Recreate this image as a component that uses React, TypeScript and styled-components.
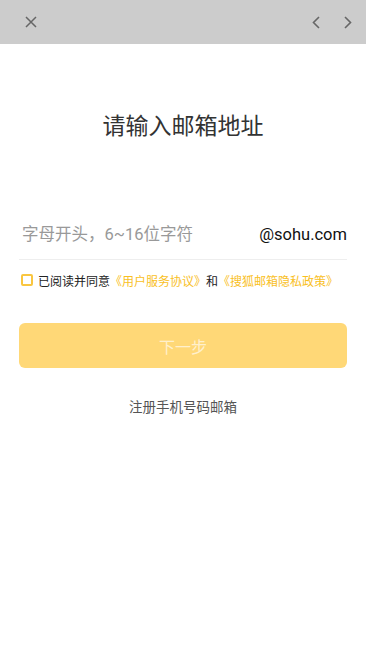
import React from "react";
import styled, { createGlobalStyle } from "styled-components";

const GlobalStyle = createGlobalStyle`
  html, body {
    margin: 0;
    padding: 0;
    background: #ffffff;
  }
  body {
    font-family: Roboto, "Noto Sans CJK SC", sans-serif;
  }
`;

function App() {
  return (
    <>
      <GlobalStyle />
      <Page>
        <Header>
          <IconButton aria-label="close">
            <svg width="12" height="12" viewBox="0 0 12 12">
              <path d="M1 1 L11 11 M11 1 L1 11" stroke="#666" strokeWidth="1.5" fill="none" />
            </svg>
          </IconButton>
          <NavGroup>
            <IconButton aria-label="back">
              <svg width="8" height="13" viewBox="0 0 8 13">
                <path d="M7 1 L1.5 6.5 L7 12" stroke="#666" strokeWidth="1.6" fill="none" />
              </svg>
            </IconButton>
            <IconButton aria-label="forward">
              <svg width="8" height="13" viewBox="0 0 8 13">
                <path d="M1 1 L6.5 6.5 L1 12" stroke="#666" strokeWidth="1.6" fill="none" />
              </svg>
            </IconButton>
          </NavGroup>
        </Header>

        <Content>
          <Title>请输入邮箱地址</Title>

          <InputRow>
            <EmailInput placeholder="字母开头，6~16位字符" />
            <Domain>@sohu.com</Domain>
          </InputRow>

          <AgreeRow>
            <CheckBox />
            <span>已阅读并同意</span>
            <Link>《用户服务协议》</Link>
            <span>和</span>
            <Link>《搜狐邮箱隐私政策》</Link>
          </AgreeRow>

          <NextButton>下一步</NextButton>

          <SubLink>注册手机号码邮箱</SubLink>
        </Content>
      </Page>
    </>
  );
}

const Page = styled.div`
  width: 100%;
  min-height: 650px;
  background: #ffffff;
`;

const Header = styled.div`
  display: flex;
  align-items: center;
  justify-content: space-between;
  height: 44px;
  padding: 0 6px 0 19px;
  background: #cccccc;
  box-sizing: border-box;
`;

const NavGroup = styled.div`
  display: flex;
  align-items: center;
  gap: 8px;
`;

const IconButton = styled.button`
  display: flex;
  align-items: center;
  justify-content: center;
  width: 24px;
  height: 24px;
  padding: 0;
  border: none;
  background: transparent;
`;

const Content = styled.div`
  display: flex;
  flex-direction: column;
  padding: 0 19px;
`;

const Title = styled.h1`
  margin: 67px 0 0;
  font-size: 23px;
  line-height: 32px;
  font-weight: 400;
  color: #333333;
  text-align: center;
`;

const InputRow = styled.div`
  display: flex;
  align-items: center;
  height: 50px;
  margin-top: 66px;
  border-bottom: 1px solid #eeeeee;
`;

const EmailInput = styled.input`
  flex: 1;
  min-width: 0;
  padding: 0 0 0 3px;
  border: none;
  outline: none;
  background: transparent;
  font-family: Roboto, "Noto Sans CJK SC", sans-serif;
  font-size: 16.5px;
  color: #333;

  &::placeholder {
    color: #999999;
  }
`;

const Domain = styled.span`
  font-size: 16.5px;
  color: #111111;
`;

const AgreeRow = styled.div`
  display: flex;
  align-items: center;
  height: 16px;
  margin-top: 12px;
  padding-left: 2px;
  font-size: 12px;
  color: #222222;
  white-space: nowrap;
`;

const CheckBox = styled.div`
  flex: 0 0 12px;
  box-sizing: border-box;
  width: 12px;
  height: 12px;
  margin-right: 5px;
  border: 2px solid #f9c640;
  border-radius: 2px;
`;

const Link = styled.span`
  color: #f9c01e;
`;

const NextButton = styled.button`
  height: 45px;
  margin-top: 35px;
  border: none;
  border-radius: 6px;
  background: #ffd877;
  font-family: Roboto, "Noto Sans CJK SC", sans-serif;
  font-size: 16px;
  color: rgba(255, 255, 255, 0.65);
`;

const SubLink = styled.div`
  margin-top: 29px;
  font-size: 13.5px;
  line-height: 20px;
  color: #555555;
  text-align: center;
`;

export default App;
